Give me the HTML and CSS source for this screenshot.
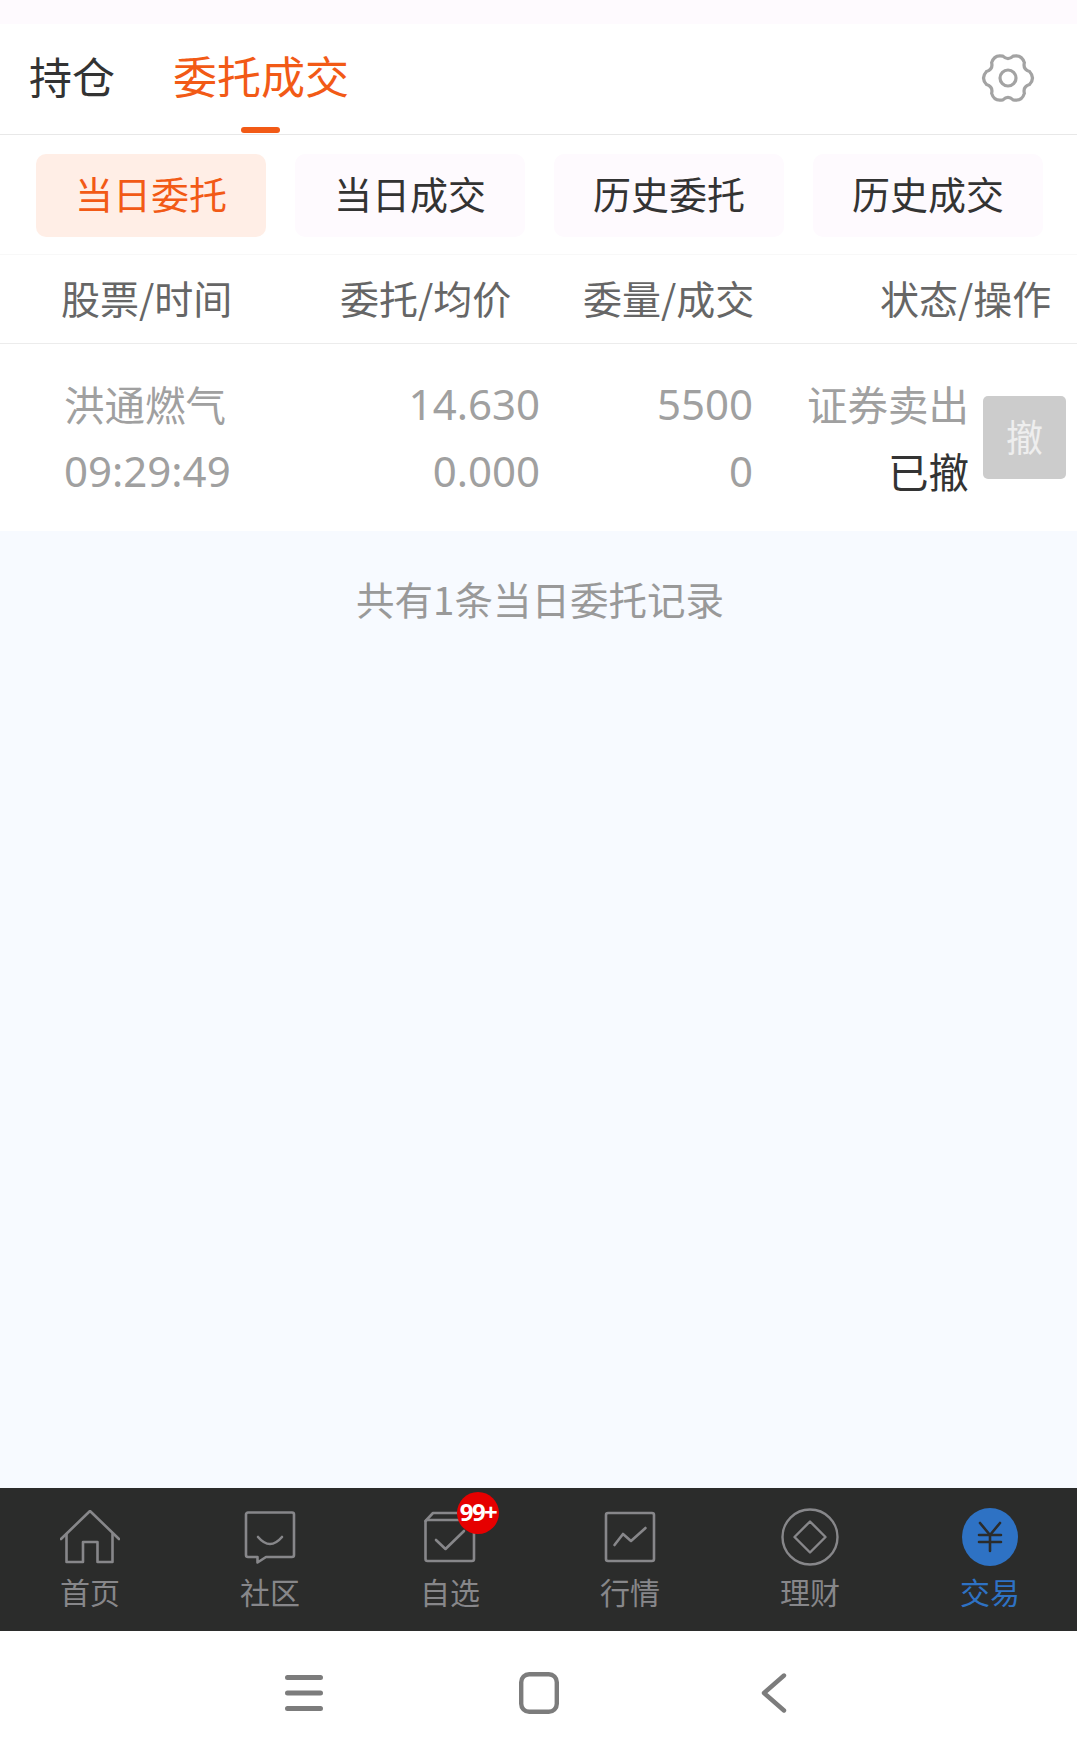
FILE: index.html
```html
<!DOCTYPE html>
<html lang="zh-CN">

<head>
  <meta charset="UTF-8" />
  <meta name="viewport" content="width=device-width, initial-scale=1.0" />
  <title>委托成交</title>
  <link rel="stylesheet" href="styles.css">
</head>

<body>
  <div class="status-bar"></div>

  <div class="top-tabs">
    <span class="top-tab">持仓</span>
    <span class="top-tab active">委托成交</span>
    <svg class="gear" width="54" height="54" viewBox="-1 -1 54 54" fill="none" stroke="#a3a3a3" stroke-width="3.2">
      <path d="M47.5 19.5Q40.7 17.5 42.37 10.63Q39.75 2.18 31.13 4.13Q26 9 20.87 4.13Q12.25 2.18 9.63 10.63Q11.3 17.5 4.5 19.5Q-1.5 26 4.5 32.5Q11.3 34.5 9.63 41.37Q12.25 49.82 20.87 47.87Q26 43 31.13 47.87Q39.75 49.82 42.37 41.37Q40.7 34.5 47.5 32.5Q53.5 26 47.5 19.5Z" />
      <circle cx="26" cy="26" r="8" />
    </svg>
  </div>

  <div class="sub-tabs">
    <div class="pill active">当日委托</div>
    <div class="pill">当日成交</div>
    <div class="pill">历史委托</div>
    <div class="pill">历史成交</div>
  </div>

  <div class="table-head">
    <span>股票/时间</span>
    <span>委托/均价</span>
    <span>委量/成交</span>
    <span>状态/操作</span>
  </div>

  <div class="order-row">
    <div class="cell name">
      <div>洪通燃气</div>
      <div class="num">09:29:49</div>
    </div>
    <div class="cell price">
      <div class="num">14.630</div>
      <div class="num">0.000</div>
    </div>
    <div class="cell qty">
      <div class="num">5500</div>
      <div class="num">0</div>
    </div>
    <div class="cell state">
      <div>证券卖出</div>
      <div class="done">已撤</div>
    </div>
    <div class="cancel-btn">撤</div>
  </div>

  <div class="list-end">
    <p>共有1条当日委托记录</p>
  </div>

  <div class="tab-bar">
    <div class="tab-item">
      <div class="tab-icon">
        <svg width="60" height="54" viewBox="0 0 60 54" fill="none" stroke="#87878a" stroke-width="2.6" stroke-linejoin="round" stroke-linecap="round">
          <path d="M1 29L30 1L59 29" />
          <path d="M6.5 24V52H23V32H37.5V52H52.5V24" />
        </svg>
      </div>
      <span>首页</span>
    </div>
    <div class="tab-item">
      <div class="tab-icon">
        <svg width="52" height="53" viewBox="0 0 52 53" fill="none" stroke="#87878a" stroke-width="2.6" stroke-linejoin="round" stroke-linecap="round">
          <path d="M4 1.5H48A2 2 0 0 1 50 3.5V44A2 2 0 0 1 48 46H22L13.5 51.5V46H4A2 2 0 0 1 2 44V3.5A2 2 0 0 1 4 1.5Z" />
          <path d="M14 26Q26 40 38 26" />
        </svg>
      </div>
      <span>社区</span>
    </div>
    <div class="tab-item">
      <div class="tab-icon with-badge">
        <svg width="52" height="52" viewBox="0 0 52 52" fill="none" stroke="#87878a" stroke-width="2.6" stroke-linejoin="round" stroke-linecap="round">
          <path d="M1.5 11A2 2 0 0 1 3.5 9H48A2 2 0 0 1 50 11V48A2 2 0 0 1 48 50H3.5A2 2 0 0 1 1.5 48Z" />
          <path d="M1.5 10L9 2H40" />
          <path d="M12 29L21.5 38L40 20" />
        </svg>
        <span class="badge">99+</span>
      </div>
      <span>自选</span>
    </div>
    <div class="tab-item">
      <div class="tab-icon">
        <svg width="52" height="52" viewBox="0 0 52 52" fill="none" stroke="#87878a" stroke-width="2.6" stroke-linejoin="round" stroke-linecap="round">
          <rect x="2" y="2" width="48" height="48" rx="2" />
          <path d="M10.5 34L19 23L27 30L41.5 17" />
        </svg>
      </div>
      <span>行情</span>
    </div>
    <div class="tab-item">
      <div class="tab-icon">
        <svg width="58" height="58" viewBox="0 0 58 58" fill="none" stroke="#87878a" stroke-width="2.4" stroke-linejoin="round">
          <circle cx="29" cy="29" r="27.5" />
          <path d="M29 13.5L44.5 29L29 44.5L13.5 29Z" />
        </svg>
      </div>
      <span>理财</span>
    </div>
    <div class="tab-item current">
      <div class="tab-icon">
        <svg width="56" height="58" viewBox="0 0 56 58" fill="none" stroke="#2b2c2b" stroke-width="2.6" stroke-linecap="round" stroke-linejoin="round">
          <ellipse cx="28" cy="29" rx="28" ry="29" fill="#2e72c4" stroke="none" />
          <path d="M18 15L28 27L38 15" />
          <path d="M17 27H39M17 34H39M28 27V43" />
        </svg>
      </div>
      <span>交易</span>
    </div>
  </div>

  <div class="sys-nav">
    <svg width="38" height="36" viewBox="0 0 38 36" fill="none" stroke="#7c7c7c" stroke-width="5" stroke-linecap="round">
      <path d="M2.5 2.5H35.5M2.5 18H35.5M2.5 33.5H35.5" />
    </svg>
    <svg class="sys-home" width="40" height="42" viewBox="0 0 40 42" fill="none" stroke="#7c7c7c" stroke-width="4.4">
      <rect x="2.2" y="2.2" width="35.6" height="37.6" rx="8" />
    </svg>
    <svg class="sys-back" width="26" height="40" viewBox="0 0 26 40" fill="none" stroke="#7c7c7c" stroke-width="4.4" stroke-linecap="round" stroke-linejoin="round">
      <path d="M23 2.5L3 20L23 37.5" />
    </svg>
  </div>
</body>

</html>
```

FILE: styles.css
```css
body {
  font-family: "Noto Sans CJK SC", "Noto Sans", sans-serif;
  background-color: #fff;
  margin: 0;
  padding: 0;
  height: 1761px;
  display: flex;
  flex-direction: column;
  overflow: hidden;
  color: #333;
}

.status-bar {
  height: 24px;
  background-color: #fefafe;
}

.top-tabs {
  height: 111px;
  display: flex;
  align-items: center;
  padding: 0 0 8px 29px;
  box-sizing: border-box;
  border-bottom: 1px solid #e8e8e8;
  position: relative;
}

.top-tab {
  font-size: 43px;
  margin-right: 58px;
  position: relative;
  color: #333;
}

.top-tab.active {
  font-size: 44px;
  color: #f25a16;
}

/* short bar sitting on the divider */
.top-tab.active::after {
  content: "";
  position: absolute;
  left: 50%;
  bottom: -26px;
  width: 39px;
  height: 6px;
  margin-left: -20px;
  border-radius: 3px;
  background-color: #f25a16;
}

.gear {
  position: absolute;
  right: 42px;
  top: 27px;
}

.sub-tabs {
  height: 120px;
  display: flex;
  gap: 29px;
  padding: 19px 0 17px 36px;
  box-sizing: border-box;
  border-bottom: 1px solid #f8f8f8;
}

.pill {
  width: 230px;
  display: flex;
  align-items: center;
  justify-content: center;
  padding-bottom: 6px;
  box-sizing: border-box;
  font-size: 38px;
  border-radius: 10px;
  background-color: #fefafe;
  color: #333;
}

.pill.active {
  background-color: #ffeee6;
  color: #f25a16;
}

.table-head {
  height: 89px;
  display: grid;
  grid-template-columns: 279px 243px 297px auto;
  align-items: center;
  padding: 0 0 5px 61px;
  box-sizing: border-box;
  border-bottom: 1px solid #ececec;
  font-size: 39px;
  color: #666;
}

.order-row {
  height: 187px;
  display: flex;
  align-items: center;
  padding: 0 0 0 64px;
  box-sizing: border-box;
  font-size: 40.5px;
  line-height: 67px;
  color: #a0a0a0;
}

.cell {
  text-align: right;
  margin-top: -2px;
}

/* digits run a little larger than the Chinese text */
.num {
  font-family: "Noto Sans", sans-serif;
  font-size: 42px;
}

.cell.name {
  width: 161px;
  text-align: left;
  white-space: nowrap;
}

.cell.price {
  width: 315px;
}

.cell.qty {
  width: 213px;
}

.cell.state {
  width: 216px;
}

.done {
  color: #333;
}

.cancel-btn {
  width: 83px;
  height: 83px;
  margin-left: 14px;
  padding-bottom: 2px;
  box-sizing: border-box;
  border-radius: 5px;
  background-color: #ccc;
  color: #eee;
  font-size: 37px;
  display: flex;
  align-items: center;
  justify-content: center;
}

.list-end {
  flex: 1;
  background-color: #f7faff;
  padding: 40px 0 0 3px;
}

.list-end p {
  margin: 0;
  text-align: center;
  font-size: 38.5px;
  line-height: 54px;
  color: #999;
}

.tab-bar {
  height: 143px;
  display: grid;
  grid-template-columns: repeat(6, 180px);
  box-sizing: border-box;
  padding-top: 20px;
  background-color: #2b2c2b;
  color: #87878a;
}

.tab-item {
  display: flex;
  flex-direction: column;
  align-items: center;
  font-size: 30px;
  line-height: 36px;
}

.tab-item.current {
  color: #2e72c4;
}

.tab-icon {
  height: 58px;
  margin-bottom: 7px;
  display: flex;
  align-items: center;
  position: relative;
}

.badge {
  position: absolute;
  left: 33px;
  top: -16px;
  width: 42px;
  height: 42px;
  border-radius: 50%;
  background-color: #e60000;
  color: #fff;
  font-family: "Noto Sans", sans-serif;
  font-size: 24px;
  font-weight: 700;
  letter-spacing: -1.5px;
  line-height: 40px;
  text-align: center;
}

.sys-nav {
  height: 130px;
  display: flex;
  align-items: center;
  padding: 0 0 6px 285px;
  box-sizing: border-box;
}

.sys-home {
  margin-left: 196px;
}

.sys-back {
  margin-left: 202px;
}
```
